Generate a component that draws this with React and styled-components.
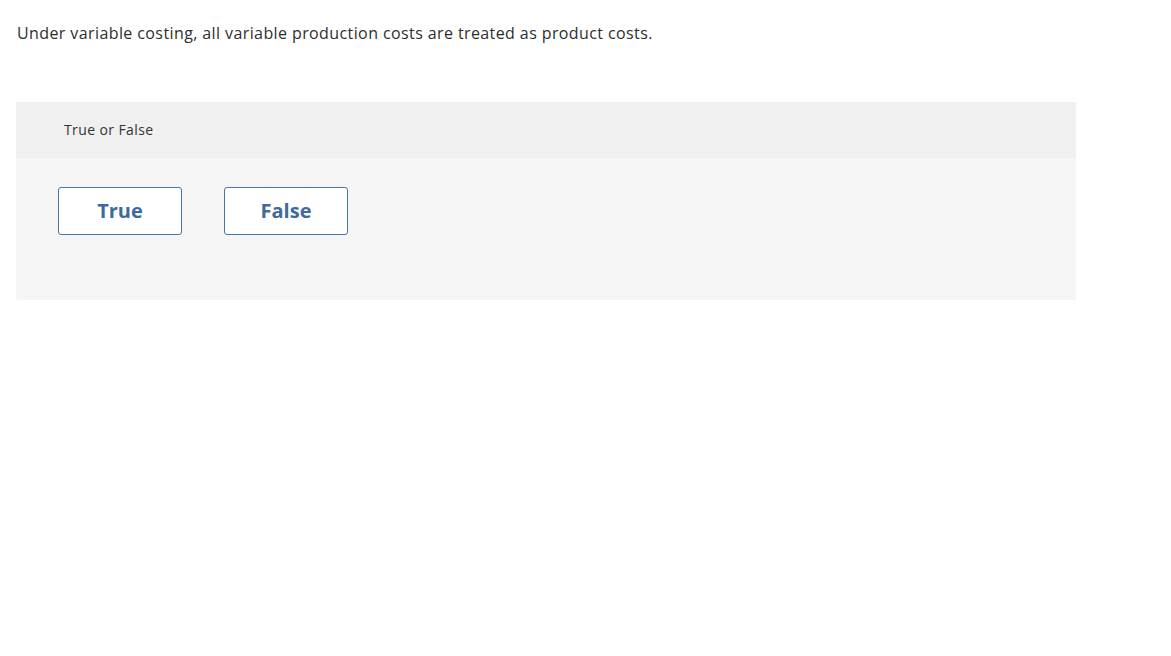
import React from 'react';
import styled, { createGlobalStyle } from 'styled-components';

const GlobalStyle = createGlobalStyle`
  body {
    margin: 0;
    background: #ffffff;
    font-family: "Open Sans", Arial, sans-serif;
    color: #333333;
  }
`;

const Page = styled.div`
  padding: 23px 16px 0 16px;
  width: 1060px;
`;

const Prompt = styled.p`
  margin: 0 0 0 1px;
  font-size: 16px;
  line-height: 21px;
  letter-spacing: 0.4px;
  color: #2e2e2e;
`;

const Panel = styled.section`
  margin-top: 58px;
  border-radius: 2px;
  overflow: hidden;
  background: #f5f5f5;
`;

const PanelHeader = styled.div`
  height: 56px;
  display: flex;
  align-items: center;
  padding: 0 0 2px 48px;
  box-sizing: border-box;
  background: #f0f0f0;
  font-size: 14px;
  letter-spacing: 0.4px;
  color: #333333;
`;

const PanelBody = styled.div`
  display: flex;
  gap: 42px;
  padding: 29px 42px 65px;
`;

const ChoiceButton = styled.button`
  width: 124px;
  height: 48px;
  padding: 0 0 2px;
  border: 1px solid #4a76a4;
  border-radius: 3px;
  background: #ffffff;
  color: #3d6b9d;
  font-family: "Open Sans", Arial, sans-serif;
  font-size: 20px;
  font-weight: 700;
  cursor: pointer;
`;

const choices = ['True', 'False'];

const App = () => (
  <>
    <GlobalStyle />
    <Page>
      <Prompt>Under variable costing, all variable production costs are treated as product costs.</Prompt>
      <Panel>
        <PanelHeader>True or False</PanelHeader>
        <PanelBody>
          {choices.map((c) => (
            <ChoiceButton key={c}>{c}</ChoiceButton>
          ))}
        </PanelBody>
      </Panel>
    </Page>
  </>
);

export default App;
